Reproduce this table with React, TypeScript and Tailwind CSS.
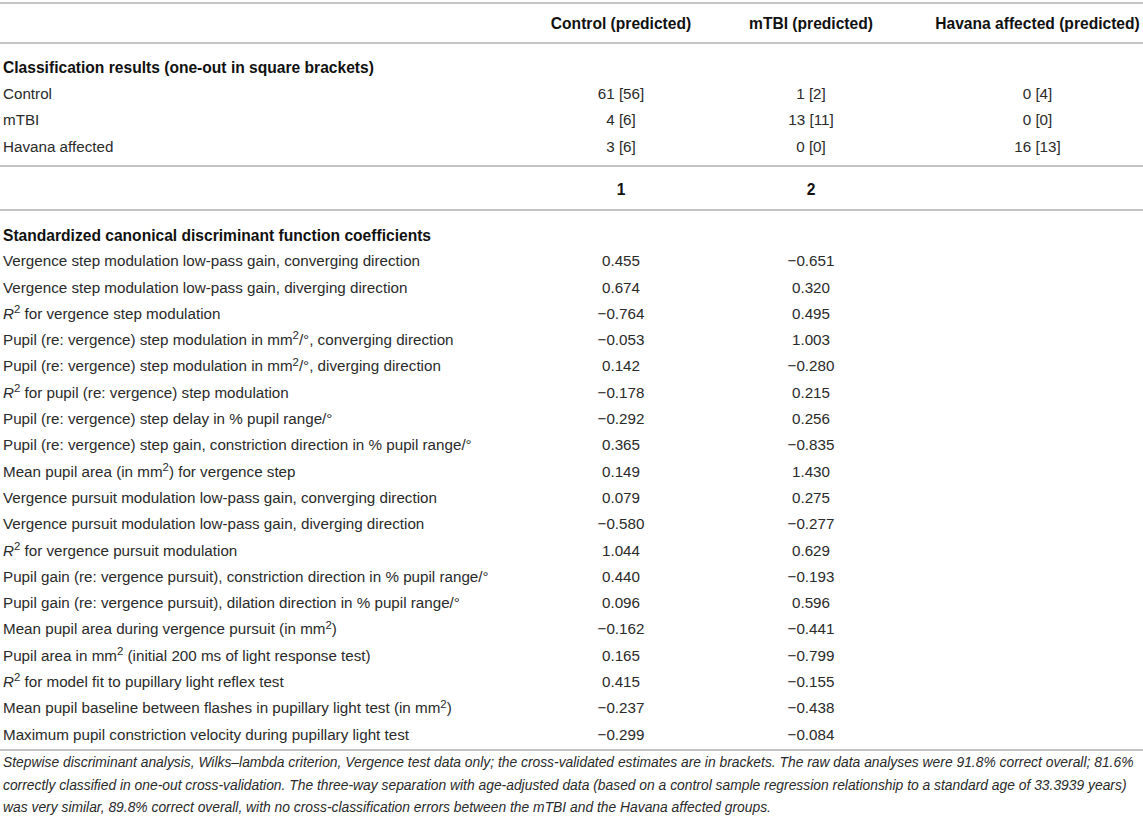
import React from "react";

const grid = "grid grid-cols-[546px_150px_230px_217px] items-center";

const R2 = () => (
  <>
    <span className="italic">R</span>
    <sup>2</sup>
  </>
);

const rows: [React.ReactNode, string, string][] = [
  ["Vergence step modulation low-pass gain, converging direction", "0.455", "\u22120.651"],
  ["Vergence step modulation low-pass gain, diverging direction", "0.674", "0.320"],
  [<><R2 /> for vergence step modulation</>, "\u22120.764", "0.495"],
  [<>Pupil (re: vergence) step modulation in mm<sup>2</sup>/°, converging direction</>, "\u22120.053", "1.003"],
  [<>Pupil (re: vergence) step modulation in mm<sup>2</sup>/°, diverging direction</>, "0.142", "\u22120.280"],
  [<><R2 /> for pupil (re: vergence) step modulation</>, "\u22120.178", "0.215"],
  ["Pupil (re: vergence) step delay in % pupil range/°", "\u22120.292", "0.256"],
  ["Pupil (re: vergence) step gain, constriction direction in % pupil range/°", "0.365", "\u22120.835"],
  [<>Mean pupil area (in mm<sup>2</sup>) for vergence step</>, "0.149", "1.430"],
  ["Vergence pursuit modulation low-pass gain, converging direction", "0.079", "0.275"],
  ["Vergence pursuit modulation low-pass gain, diverging direction", "\u22120.580", "\u22120.277"],
  [<><R2 /> for vergence pursuit modulation</>, "1.044", "0.629"],
  ["Pupil gain (re: vergence pursuit), constriction direction in % pupil range/°", "0.440", "\u22120.193"],
  ["Pupil gain (re: vergence pursuit), dilation direction in % pupil range/°", "0.096", "0.596"],
  [<>Mean pupil area during vergence pursuit (in mm<sup>2</sup>)</>, "\u22120.162", "\u22120.441"],
  [<>Pupil area in mm<sup>2</sup> (initial 200 ms of light response test)</>, "0.165", "\u22120.799"],
  [<><R2 /> for model fit to pupillary light reflex test</>, "0.415", "\u22120.155"],
  [<>Mean pupil baseline between flashes in pupillary light test (in mm<sup>2</sup>)</>, "\u22120.237", "\u22120.438"],
  ["Maximum pupil constriction velocity during pupillary light test", "\u22120.299", "\u22120.084"],
];

const classRows: [string, string, string, string][] = [
  ["Control", "61 [56]", "1 [2]", "0 [4]"],
  ["mTBI", "4 [6]", "13 [11]", "0 [0]"],
  ["Havana affected", "3 [6]", "0 [0]", "16 [13]"],
];

const Line = () => <div className="h-[2px] bg-[#c4c4c4]" />;

export default function App() {
  return (
    <div className="w-[1143px] h-[825px] bg-white font-['Liberation_Sans',Arial,sans-serif] text-[#2a2a2a] text-[15.2px] pt-[2px] overflow-hidden">
      <Line />
      <div className={`${grid} h-[38px] pt-[1px] font-bold text-[15.6px] text-[#111]`}>
        <div />
        <div className="text-center whitespace-nowrap">Control (predicted)</div>
        <div className="text-center whitespace-nowrap">mTBI (predicted)</div>
        <div className="text-center whitespace-nowrap pl-[6px]">Havana affected (predicted)</div>
      </div>
      <Line />
      <div className="pt-[11px] pb-[5px]">
        <div className="h-[26.3px] flex items-center pl-[3px] font-bold text-[15.6px] text-[#111]">
          Classification results (one-out in square brackets)
        </div>
        {classRows.map((r) => (
          <div key={r[0]} className={`${grid} h-[26.3px]`}>
            <div className="pl-[3px]">{r[0]}</div>
            <div className="text-center">{r[1]}</div>
            <div className="text-center">{r[2]}</div>
            <div className="text-center pl-[6px]">{r[3]}</div>
          </div>
        ))}
      </div>
      <Line />
      <div className={`${grid} h-[42px] pt-[3px] font-bold text-[15.6px] text-[#111]`}>
        <div />
        <div className="text-center">1</div>
        <div className="text-center">2</div>
        <div />
      </div>
      <Line />
      <div className="pt-[11px] pb-[1px]">
        <div className="h-[26.3px] flex items-center pl-[3px] font-bold text-[15.6px] text-[#111]">
          Standardized canonical discriminant function coefficients
        </div>
        {rows.map((r, i) => (
          <div key={i} className={`${grid} h-[26.3px]`}>
            <div className="pl-[3px] whitespace-nowrap">{r[0]}</div>
            <div className="text-center">{r[1]}</div>
            <div className="text-center">{r[2]}</div>
            <div />
          </div>
        ))}
      </div>
      <Line />
      <div className="pt-[0px] pl-[3px] italic text-[13.85px] leading-[22.5px] text-[#2a2a2a]">
        <div className="whitespace-nowrap">
          Stepwise discriminant analysis, Wilks–lambda criterion, Vergence test data only; the cross-validated estimates are in brackets. The raw data analyses were 91.8% correct overall; 81.6%
        </div>
        <div className="whitespace-nowrap">
          correctly classified in one-out cross-validation. The three-way separation with age-adjusted data (based on a control sample regression relationship to a standard age of 33.3939 years)
        </div>
        <div className="whitespace-nowrap">
          was very similar, 89.8% correct overall, with no cross-classification errors between the mTBI and the Havana affected groups.
        </div>
      </div>
    </div>
  );
}
